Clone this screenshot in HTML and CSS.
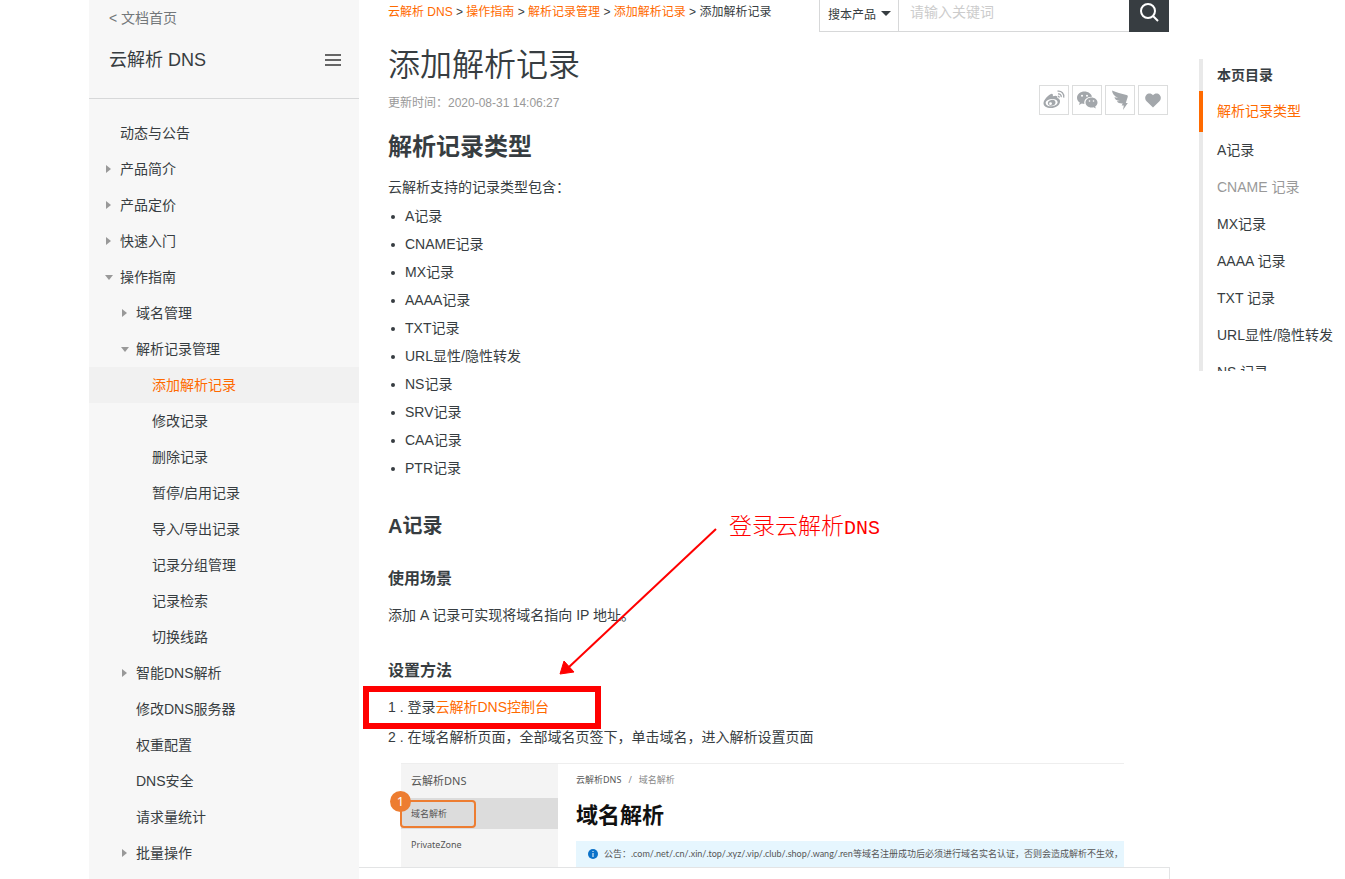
FILE: index.html
```html
<!DOCTYPE html>
<html lang="zh-CN">
<head>
<meta charset="utf-8">
<meta name="viewport" content="width=device-width, initial-scale=1">
<title>添加解析记录 - 云解析 DNS</title>
<link rel="stylesheet" href="styles.css">
</head>
<body>
<div class="page">
  <aside class="sidebar">
    <header class="side-head">
      <a class="back" href="#">&lt; 文档首页</a>
      <div class="product">
        <span>云解析 DNS</span>
        <button class="menu-btn" type="button" aria-label="菜单">
          <svg width="16" height="12" viewBox="0 0 16 12"><path d="M0 1h16M0 6h16M0 11h16" stroke="#666" stroke-width="2"/></svg>
        </button>
      </div>
    </header>
    <nav class="side-nav">
      <ul>
        <li><a href="#">动态与公告</a></li>
        <li><a class="closed" href="#">产品简介</a></li>
        <li><a class="closed" href="#">产品定价</a></li>
        <li><a class="closed" href="#">快速入门</a></li>
        <li><a class="open" href="#">操作指南</a>
          <ul class="level-2">
            <li><a class="closed" href="#">域名管理</a></li>
            <li><a class="open" href="#">解析记录管理</a>
              <ul class="level-3">
                <li><a class="current" href="#">添加解析记录</a></li>
                <li><a href="#">修改记录</a></li>
                <li><a href="#">删除记录</a></li>
                <li><a href="#">暂停/启用记录</a></li>
                <li><a href="#">导入/导出记录</a></li>
                <li><a href="#">记录分组管理</a></li>
                <li><a href="#">记录检索</a></li>
                <li><a href="#">切换线路</a></li>
              </ul>
            </li>
            <li><a class="closed" href="#">智能DNS解析</a></li>
            <li><a href="#">修改DNS服务器</a></li>
            <li><a href="#">权重配置</a></li>
            <li><a href="#">DNS安全</a></li>
            <li><a href="#">请求量统计</a></li>
            <li><a class="closed" href="#">批量操作</a></li>
          </ul>
        </li>
      </ul>
    </nav>
  </aside>

  <main class="main">
    <article class="doc">
      <div class="topbar">
        <nav class="crumbs"><a href="#">云解析 DNS</a> &gt; <a href="#">操作指南</a> &gt; <a href="#">解析记录管理</a> &gt; <a href="#">添加解析记录</a> &gt; 添加解析记录</nav>
        <form class="search">
          <div class="scope">
            <select aria-label="搜索范围"><option>搜本产品</option></select>
            <svg width="10" height="5" viewBox="0 0 10 5"><path d="M0 0h10L5 5z" fill="#373d41"/></svg>
          </div>
          <input class="keyword" type="text" placeholder="请输入关键词" aria-label="关键词">
          <button class="go" type="button" aria-label="搜索">
            <svg width="20" height="20" viewBox="0 0 20 20" fill="none" stroke="#fff" stroke-width="2"><circle cx="9" cy="8" r="7"/><path d="M14 13l5 5"/></svg>
          </button>
        </form>
      </div>

      <h1>添加解析记录</h1>
      <div class="meta">
        <span>更新时间：2020-08-31 14:06:27</span>
        <div class="share">
          <button type="button" aria-label="微博">
            <svg width="24" height="24" viewBox="0 0 24 24"><path fill="#a3a7ab" fill-rule="evenodd" d="M8 6.500c2-1.500 3.500-.8 2.800 1.800 3-1.100 5-.6 4.500 1.700 2 .5 3 2 2.700 4-.6 3.500-4.300 6-9 6C4.500 20 1.500 18.200 1.500 15.200c0-3 3.500-6.700 6.500-8.700zM9.500 11c-3.500.3-6 2-5.800 4.200.2 2.100 3 3.400 6.300 3.100s5.800-2.100 5.600-4.200c-.2-2.100-2.800-3.400-6.100-3.100zM9.200 12c2.500-.6 4.500.8 4.300 2.800-.2 1.800-2 3-4.300 3-2.100 0-3.500-1.200-3.400-2.900.1-1.400 1.500-2.600 3.400-2.900zM8.500 14.300a1.400 1.300 0 1 0 .1 2.600 1.400 1.300 0 0 0-.1-2.600z"/><path d="M16 6c2-.3 3.600 1.200 3.200 3.200M15.500 3.200c4-.6 7 2.500 6.200 6.500M15.800 8.200c.9 0 1.400.5 1.300 1.400" fill="none" stroke="#a3a7ab" stroke-width="1.300"/></svg>
          </button>
          <button type="button" aria-label="微信">
            <svg width="24" height="24" viewBox="0 0 24 24"><path fill="#a3a7ab" d="M9.500 3.500C5.400 3.500 2 6.200 2 9.700c0 2 1.100 3.700 2.800 4.900L4 17l2.800-1.400c.9.200 1.700.3 2.600.3C8.500 11.500 12.200 8.500 17 8.700c-.8-3-3.900-5.200-7.500-5.200z"/><path fill="#a3a7ab" d="M16.500 9.500c-3.300 0-6 2.200-6 5s2.700 5 6 5c.7 0 1.400-.1 2-.3l2.300 1.200-.6-2c1.400-.9 2.300-2.300 2.300-3.900 0-2.800-2.700-5-6-5z"/><g fill="#fff"><circle cx="7" cy="7.800" r="1"/><circle cx="12" cy="7.800" r="1"/><circle cx="14.500" cy="13" r=".8"/><circle cx="18.500" cy="13" r=".8"/></g></svg>
          </button>
          <button type="button" aria-label="钉钉">
            <svg width="24" height="24" viewBox="0 0 24 24"><path fill="#a3a7ab" d="M4 2.500c4 2 9.500 3.200 14.500 4.600 1.200.3 1.500.9 1.200 1.900L17.800 15h2L15 22l.8-4.600h-2.200l1.200-2c-2.700.2-4.900-.4-5.900-2.200l3-.2C8.300 12.400 6.800 11.300 6.400 9.300l3.600.5C6.300 8.200 4.300 5.700 4 2.500z"/></svg>
          </button>
          <button type="button" aria-label="收藏">
            <svg width="24" height="24" viewBox="0 0 24 24"><path fill="#a3a7ab" d="M12 19.500l-6.200-6C3.700 11.300 3.700 8.600 5.300 6.900 7.200 5 10.400 5.200 12 7.200c1.600-2 4.800-2.200 6.700-.3 1.600 1.700 1.600 4.400-.5 6.600z"/></svg>
          </button>
        </div>
      </div>

      <h2>解析记录类型</h2>
      <p class="lead">云解析支持的记录类型包含：</p>
      <ul class="types">
        <li>A记录</li>
        <li>CNAME记录</li>
        <li>MX记录</li>
        <li>AAAA记录</li>
        <li>TXT记录</li>
        <li>URL显性/隐性转发</li>
        <li>NS记录</li>
        <li>SRV记录</li>
        <li>CAA记录</li>
        <li>PTR记录</li>
      </ul>

      <h3>A记录</h3>
      <h4>使用场景</h4>
      <p class="usage">添加 A 记录可实现将域名指向 IP 地址。</p>
      <h4>设置方法</h4>
      <div class="steps">
        <p class="step marked">1 . 登录<a href="#">云解析DNS控制台</a></p>
        <p class="step">2 . 在域名解析页面，全部域名页签下，单击域名，进入解析设置页面</p>
      </div>

      <figure class="console">
        <div class="console-side">
          <div class="console-name">云解析DNS</div>
          <div class="console-item selected">域名解析<span class="outline"></span><span class="badge">1</span></div>
          <div class="console-item">PrivateZone</div>
        </div>
        <div class="console-main">
          <div class="console-crumbs">云解析DNS <span>&nbsp;&nbsp;/&nbsp;&nbsp; 域名解析</span></div>
          <div class="console-title">域名解析</div>
          <div class="notice">
            <svg width="10" height="10" viewBox="0 0 10 10"><circle cx="5" cy="5" r="5" fill="#0b72c9"/><path d="M5 2v1M5 4v4" stroke="#fff"/></svg>
            <span>公告：.com/.net/.cn/.xin/.top/.xyz/.vip/.club/.shop/.wang/.ren等域名注册成功后必须进行域名实名认证，否则会造成解析不生效，</span>
          </div>
        </div>
      </figure>

      <svg class="arrow" width="160" height="150" viewBox="0 0 160 150"><path d="M157 2L10 140" stroke="#f00" stroke-width="2"/><path d="M1 147l4-13 10 11z" fill="#f00" stroke="#f00"/></svg>
      <div class="callout">登录云解析<span>DNS</span></div>
    </article>
    <div class="doc-foot"></div>
  </main>

  <nav class="toc">
    <div class="toc-title">本页目录</div>
    <ul>
      <li class="active"><a href="#">解析记录类型</a></li>
      <li><a href="#">A记录</a></li>
      <li class="muted"><a href="#">CNAME 记录</a></li>
      <li><a href="#">MX记录</a></li>
      <li><a href="#">AAAA 记录</a></li>
      <li><a href="#">TXT 记录</a></li>
      <li><a href="#">URL显性/隐性转发</a></li>
      <li><a href="#">NS 记录</a></li>
    </ul>
  </nav>
</div>
</body>
</html>
```
FILE: styles.css
```css
*, *::before, *::after { box-sizing: border-box; }
body {
  margin: 0;
  background: #fff;
  color: #373d41;
  font: 14px/28px "Liberation Sans", "Noto Sans CJK SC", sans-serif;
}
a { color: inherit; text-decoration: none; }
ul { list-style: none; margin: 0; padding: 0; }
h1, h2, h3, h4, p, figure { margin: 0; }
button { border: 0; padding: 0; background: none; cursor: pointer; }
svg { display: block; }

.page {
  display: grid;
  grid-template-columns: 270px minmax(0, 1fr) 146px;
  min-height: 100vh;
  padding-left: 89px;
}

/* Sidebar */
.sidebar { background: #f7f7f7; }
.side-head { padding: 4px 18px 20px 20px; border-bottom: 1px solid #d7d8d9; }
.back { display: block; color: #73777a; }
.product {
  display: flex;
  justify-content: space-between;
  align-items: center;
  margin-top: 10px;
  font-size: 18px;
  line-height: 36px;
}
.side-nav { padding: 16px 0 8px; }
.side-nav a {
  display: flex;
  align-items: center;
  height: 36px;
  padding-left: 16px;
}
.side-nav a::before { content: ""; flex: none; width: 15px; }
.side-nav .closed::before {
  width: 5px;
  margin: 0 9px 0 1px;
  border: solid transparent;
  border-width: 4px 0 4px 5px;
  border-left-color: #999;
}
.side-nav .open::before {
  width: 8px;
  margin-right: 7px;
  border: solid transparent;
  border-width: 5px 4px 0;
  border-top-color: #999;
}
.side-nav .level-2 a { padding-left: 32px; }
.side-nav .level-3 a { padding-left: 48px; }
.side-nav .current { color: #ff6a00; background: #f1f1f1; }

/* Document */
.main { display: flex; flex-direction: column; margin-right: 29px; }
.doc { position: relative; padding: 0 1px 0 29px; }
.doc a { color: #ff6a00; }
.topbar { display: flex; justify-content: space-between; height: 32px; }
.crumbs { font-size: 12px; line-height: 24px; }
.search { display: flex; width: 350px; border: solid #d7d8d9; border-width: 0 0 1px 1px; }
.scope { position: relative; width: 79px; border-right: 1px solid #d7d8d9; }
.scope select {
  width: 100%;
  height: 100%;
  padding: 0 8px 5px;
  border: 0;
  appearance: none;
  color: inherit;
  font: inherit;
  font-size: 12px;
  background: none;
}
.scope svg { position: absolute; right: 7px; top: 11px; pointer-events: none; }
.keyword { flex: 1; min-width: 0; padding: 0 11px 8px; border: 0; font: inherit; }
.keyword::placeholder { color: #ccc; }
.go { display: flex; justify-content: center; width: 40px; height: 32px; padding-top: 3px; background: #373d41; }

h1 { margin-top: 13px; font-size: 32px; line-height: 40px; font-weight: 350; }
.meta { display: flex; justify-content: space-between; color: #999; font-size: 12px; line-height: 36px; height: 30px; }
.share { display: flex; gap: 3px; padding-right: 1px; }
.share button {
  display: flex;
  align-items: center;
  justify-content: center;
  width: 30px;
  height: 30px;
  border: 1px solid #dcdddd;
}
h2 { margin-top: 16px; font-size: 24px; line-height: 32px; }
.lead { margin-top: 10px; }
.types { margin-top: 1px; }
.types li { display: flex; align-items: center; }
.types li::before {
  content: "";
  width: 4px;
  height: 4px;
  margin: 2px 10px 0 3px;
  border-radius: 50%;
  background: #373d41;
}
h3 { margin-top: 30px; font-size: 20px; line-height: 28px; }
h4 { margin-top: 27px; font-size: 16px; line-height: 24px; }
.usage { margin-top: 10px; }
.usage + h4 { margin-top: 30px; }
.steps { display: grid; gap: 2px; margin-top: 10px; }
.marked { position: relative; }
.marked::after {
  content: "";
  position: absolute;
  left: -25px;
  top: -7px;
  width: 238px;
  height: 43px;
  border: 6px solid #f00;
  pointer-events: none;
}
.arrow { position: absolute; left: 200px; top: 527px; pointer-events: none; }
.callout {
  position: absolute;
  left: 370px;
  top: 512px;
  color: #f00;
  font-size: 23px;
  font-weight: 300;
}
.callout span { font-family: "Liberation Mono", monospace; font-size: 20px; }

/* Console preview */
.console {
  display: grid;
  grid-template-columns: 157px minmax(0, 1fr);
  height: 104px;
  margin: 12px 45px 0 13px;
  border-top: 1px solid #eee;
  font-family: "Noto Sans", "Noto Sans CJK SC", sans-serif;
  font-size: 9px;
  color: #555;
}
.console-side { background: #f4f4f4; }
.console-name { padding-left: 10px; font-size: 11px; line-height: 34px; }
.console-item { position: relative; padding-left: 10px; line-height: 31px; }
.selected { background: #dcdcdc; }
.outline {
  position: absolute;
  left: -1px;
  top: 2px;
  width: 76px;
  height: 28px;
  border: 2px solid #ed7d31;
  border-radius: 4px;
}
.badge {
  position: absolute;
  left: -11px;
  top: -7px;
  width: 21px;
  height: 21px;
  border-radius: 50%;
  background: #ed7d31;
  color: #fff;
  font-size: 13px;
  line-height: 21px;
  text-align: center;
}
.console-main { padding-left: 18px; overflow: hidden; }
.console-crumbs { line-height: 32px; }
.console-crumbs span { color: #888; }
.console-title { margin-top: 2px; color: #111; font-size: 22px; font-weight: 700; line-height: 32px; }
.notice {
  display: flex;
  align-items: center;
  gap: 6px;
  height: 26px;
  margin-top: 11px;
  padding-left: 12px;
  background: #e6f6fe;
  font-family: Lato, "Noto Sans CJK SC", sans-serif;
  white-space: nowrap;
}
.notice svg { flex: none; }
.doc-foot { flex: 1; min-height: 12px; border: solid #e3e4e5; border-width: 1px 1px 0 0; }

/* Table of contents */
.toc {
  height: 312px;
  margin-top: 59px;
  overflow: hidden;
  background: linear-gradient(#e9e9e9, #e9e9e9) 0 0 / 4px 100% no-repeat;
}
.toc-title { padding-left: 18px; font-weight: 700; line-height: 32px; }
.toc li { padding-left: 18px; line-height: 37px; white-space: nowrap; }
.toc .active { padding-left: 14px; border-left: 4px solid #ff6a00; color: #ff6a00; line-height: 41px; }
.toc .muted { color: #999; }
```
